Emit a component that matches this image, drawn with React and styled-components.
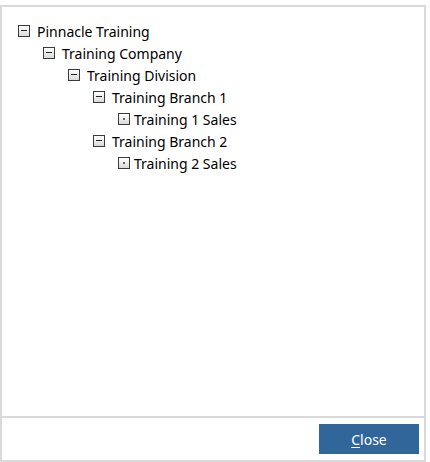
import React from "react";
import styled, { createGlobalStyle } from "styled-components";

const Global = createGlobalStyle`
  html, body { margin: 0; padding: 0; background: #fff; }
  body { font-family: "Noto Sans", "Liberation Sans", Arial, sans-serif; }
`;

const Page = styled.div`
  padding-top: 5px;
  width: 430px;
  height: 462px;
  box-sizing: border-box;
`;

const Dialog = styled.div`
  width: 426px;
  height: 457px;
  box-sizing: border-box;
  border: 2px solid #d9d9d9;
  display: flex;
  flex-direction: column;
  background: #fff;
`;

const TreeArea = styled.div`
  flex: 1;
  padding: 13px 0 0 16px;
  border-bottom: 2px solid #d9d9d9;
`;

const Row = styled.div`
  display: flex;
  align-items: center;
  height: 22px;
  padding-left: ${(p) => p.$level * 25}px;
  font-size: 14px;
  color: #000;
  white-space: nowrap;
`;

const Toggle = styled.span`
  width: 12px;
  height: 12px;
  box-sizing: border-box;
  border: 1px solid #3a3a3a;
  background: linear-gradient(#ffffff, #d9d9d9);
  margin-right: ${(p) => (p.$leaf ? 4 : 7)}px;
  position: relative;
  flex: none;
  &::after {
    content: "";
    position: absolute;
    ${(p) =>
      p.$leaf
        ? `left: 4px; top: 4px; width: 2px; height: 2px; background: #666;`
        : `left: 2px; top: 4px; width: 6px; height: 1px; background: #222;`}
  }
`;

const Footer = styled.div`
  height: 42px;
  box-sizing: border-box;
  display: flex;
  justify-content: flex-end;
  align-items: flex-start;
  padding: 6px 5px 0 0;
`;

const Button = styled.button`
  width: 100px;
  height: 30px;
  border: none;
  background: #31669b;
  color: #fff;
  font-family: "Noto Sans", "Liberation Sans", Arial, sans-serif;
  font-size: 14px;
  cursor: pointer;
  u { text-decoration: underline; text-underline-offset: 2px; }
`;

const nodes = [
  { label: "Pinnacle Training", level: 0 },
  { label: "Training Company", level: 1 },
  { label: "Training Division", level: 2 },
  { label: "Training Branch 1", level: 3 },
  { label: "Training 1 Sales", level: 4, leaf: true },
  { label: "Training Branch 2", level: 3 },
  { label: "Training 2 Sales", level: 4, leaf: true },
];

export default function App() {
  return (
    <>
      <Global />
      <Page>
        <Dialog>
          <TreeArea>
            {nodes.map((n) => (
              <Row key={n.label} $level={n.level}>
                <Toggle $leaf={n.leaf} />
                {n.label}
              </Row>
            ))}
          </TreeArea>
          <Footer>
            <Button>
              <u>C</u>lose
            </Button>
          </Footer>
        </Dialog>
      </Page>
    </>
  );
}
